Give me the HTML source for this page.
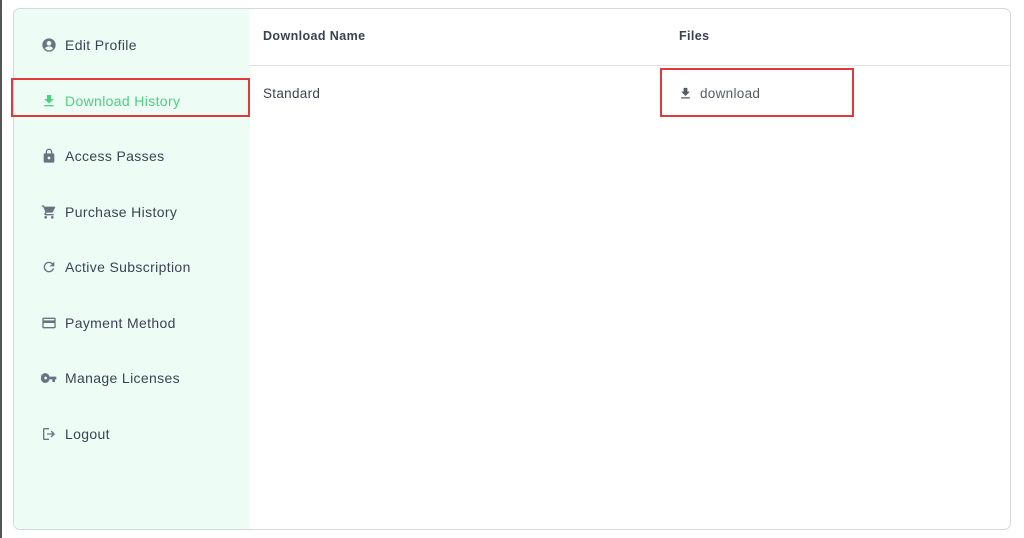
<!DOCTYPE html>
<html><head><style>
*{margin:0;padding:0;box-sizing:border-box}
body{width:1024px;height:538px;background:#fff;font-family:"Liberation Sans",sans-serif;position:relative;overflow:hidden}
.edge{position:absolute;left:0;top:0;width:2px;height:538px;background:#555}
.card{position:absolute;left:13px;top:8px;width:998px;height:522px;border:1px solid #d5d9de;border-radius:7px;overflow:hidden}
.side{position:absolute;left:0;top:0;width:235px;height:100%;background:#edfdf5}
.item{position:absolute;left:27px;height:20px;display:flex;align-items:center;font-size:14px;color:#3c4352;letter-spacing:0.35px}
.item svg{width:16px;height:16px;margin-right:8px;fill:#6b7280}
.item.g{color:#4fcf7f}.item.g svg{fill:#4fcf7f}
.hdr{position:absolute;top:0;left:235px;right:0;height:57px;border-bottom:1px solid #dfe3e8}
.th{position:absolute;top:20px;font-size:12.5px;font-weight:bold;color:#3a4150;letter-spacing:0.4px}
.td{position:absolute;top:77px;font-size:13.5px;color:#3c4352;letter-spacing:0.3px}
.red{position:absolute;border:2px solid #e0393b}
</style></head><body>
<div class="edge"></div>
<div class="card">
 <div class="side">
  <div class="item" style="top:26px"><svg viewBox="0 0 24 24"><path d="M12 2a10 10 0 100 20 10 10 0 000-20zm0 4a3.5 3.5 0 110 7 3.5 3.5 0 010-7zm0 14a8 8 0 01-6-2.8c.6-2 3.2-3.2 6-3.2s5.4 1.2 6 3.2A8 8 0 0112 20z"/></svg>Edit Profile</div>
  <div class="item g" style="top:82px"><svg viewBox="0 0 24 24"><path d="M19 9h-4V3H9v6H5l7 7 7-7zM5 18v2h14v-2H5z"/></svg>Download History</div>
  <div class="item" style="top:137px"><svg viewBox="0 0 24 24"><path d="M18 8h-1V6A5 5 0 007 6v2H6a2 2 0 00-2 2v10a2 2 0 002 2h12a2 2 0 002-2V10a2 2 0 00-2-2zM9 6a3 3 0 016 0v2H9V6zm3 11a2 2 0 110-4 2 2 0 010 4z"/></svg>Access Passes</div>
  <div class="item" style="top:193px"><svg viewBox="0 0 24 24"><path d="M7 18a2 2 0 100 4 2 2 0 000-4zM1 2v2h2l3.6 7.6-1.4 2.4A2 2 0 007 17h12v-2H7.4l1.1-2h7.5a2 2 0 001.7-1l3.6-6.5A1 1 0 0020.5 4H5.2l-.9-2H1zm16 16a2 2 0 100 4 2 2 0 000-4z"/></svg>Purchase History</div>
  <div class="item" style="top:248px"><svg viewBox="0 0 24 24"><path d="M17.6 6.4A8 8 0 1019.7 14h-2.1A6 6 0 1112 6c1.7 0 3.1.7 4.2 1.8L13 11h7V4l-2.4 2.4z"/></svg>Active Subscription</div>
  <div class="item" style="top:304px"><svg viewBox="0 0 24 24"><path d="M20 4H4a2 2 0 00-2 2v12a2 2 0 002 2h16a2 2 0 002-2V6a2 2 0 00-2-2zm0 14H4v-6h16v6zm0-10H4V6h16v2z"/></svg>Payment Method</div>
  <div class="item" style="top:359px"><svg viewBox="0 0 24 24"><path d="M12.6 10A6 6 0 100 12a6 6 0 0012.6 2H17v4h4v-4h2v-4H12.6zM7 14a2 2 0 110-4 2 2 0 010 4z"/></svg>Manage Licenses</div>
  <div class="item" style="top:415px"><svg viewBox="0 0 24 24"><path d="M5 3h7v2H5v14h7v2H5a2 2 0 01-2-2V5a2 2 0 012-2zm11 4l-1.4 1.4 2.6 2.6H9v2h8.2l-2.6 2.6L16 17l5-5-5-5z"/></svg>Logout</div>
 </div>
 <div class="hdr"></div>
 <div class="th" style="left:249px">Download Name</div>
 <div class="th" style="left:665px">Files</div>
 <div class="td" style="left:249px">Standard</div>
 <div class="td" style="left:664px;color:#555b66;display:flex;align-items:center"><svg viewBox="0 0 24 24" width="15" height="15" style="fill:#555b66;margin-right:7px"><path d="M19 9h-4V3H9v6H5l7 7 7-7zM5 18v2h14v-2H5z"/></svg>download</div>
</div>
<div class="red" style="left:11px;top:78px;width:239px;height:39px"></div>
<div class="red" style="left:660px;top:68px;width:194px;height:49px"></div>
</body></html>
